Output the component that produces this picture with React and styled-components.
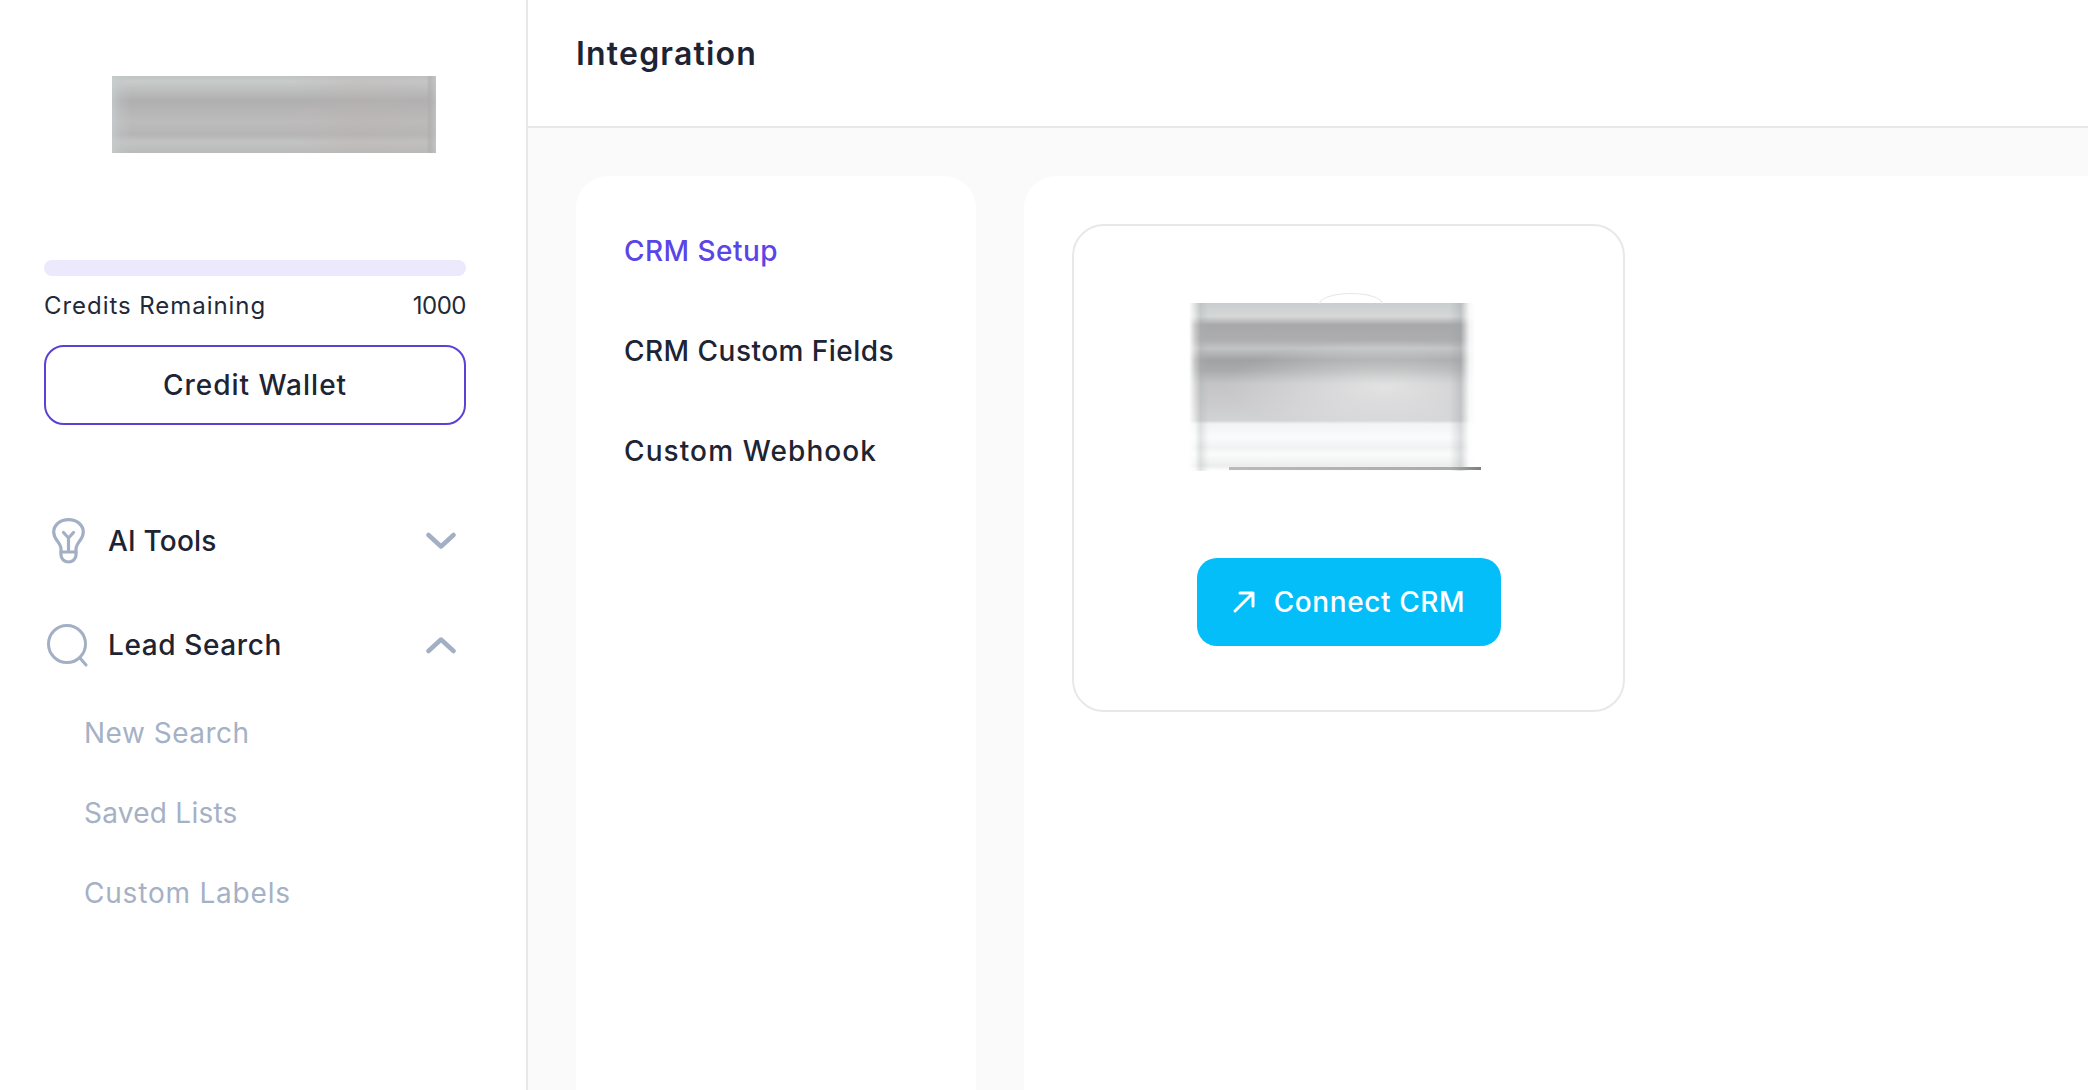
import styled, { createGlobalStyle } from "styled-components";

const GlobalStyle = createGlobalStyle`
  html, body {
    margin: 0;
    height: 100%;
    overflow: hidden;
    background: #fff;
    font-family: "Inter", "Noto Sans", sans-serif;
    color: #1e2433;
  }
  * { box-sizing: border-box; }
`;

// tracking widens the narrower fallback font to the widths in the picture
const subItems = [
  { label: "New Search", tracking: 0.5 },
  { label: "Saved Lists", tracking: 0.25 },
  { label: "Custom Labels", tracking: 0.8 },
];
const sections = [
  { label: "CRM Setup", tracking: 0.45 },
  { label: "CRM Custom Fields", tracking: 0.47 },
  { label: "Custom Webhook", tracking: 1.1 },
];

function BulbIcon() {
  return (
    <svg width="33" height="46" viewBox="0 0 33 46" fill="none" stroke="#a3afc4" strokeWidth="3.2" strokeLinecap="round" strokeLinejoin="round">
      <path d="M9 34v-3c0-3-1.600-5-4-8.500C2.800 19.500 1.700 17 1.700 14 1.700 7 8 1.600 16.500 1.600S31.300 7 31.300 14c0 3-1.100 5.500-3.300 8.500-2.400 3.500-4 5.500-4 8.500v3z" />
      <path d="M16.500 33V20M11.500 14.500l5 5.500 5-5.500" />
      <path d="M9 34v3c0 4 3.500 7 7.500 7s7.500-3 7.500-7v-3" />
    </svg>
  );
}

function SearchIcon() {
  return (
    <svg width="42" height="43" viewBox="0 0 42 43" fill="none" stroke="#a3afc4" strokeLinecap="round">
      <circle cx="20" cy="20" r="18.500" strokeWidth="3" />
      <path d="M33 34l6 7" strokeWidth="3" />
    </svg>
  );
}

function Chevron({ up }) {
  return (
    <ChevronSvg width="30" height="18" viewBox="0 0 30 18" fill="none" stroke="#a3afc4" strokeWidth="4.500" strokeLinecap="round" strokeLinejoin="round">
      <path d={up ? "M2.500 15L15 3.500 27.500 15" : "M2.500 3L15 14.500 27.500 3"} />
    </ChevronSvg>
  );
}

export default function App() {
  return (
    <>
      <GlobalStyle />
      <Layout>
        <Sidebar>
          <LogoBlur />
          <CreditBar />
          <CreditRow>
            <CreditLabel>Credits Remaining</CreditLabel>
            <CreditCount>1000</CreditCount>
          </CreditRow>
          <WalletButton>Credit Wallet</WalletButton>
          <Menu>
            <MenuRow>
              <MenuIcon><BulbIcon /></MenuIcon>
              <MenuLabel $tracking={0.2}>AI Tools</MenuLabel>
              <Chevron />
            </MenuRow>
            <MenuRow>
              <MenuIcon><SearchIcon /></MenuIcon>
              <MenuLabel $tracking={0.6}>Lead Search</MenuLabel>
              <Chevron up />
            </MenuRow>
            <SubMenu>
              {subItems.map((item) => (
                <SubItem key={item.label} $tracking={item.tracking}>{item.label}</SubItem>
              ))}
            </SubMenu>
          </Menu>
        </Sidebar>
        <Main>
          <Header>
            <Title>Integration</Title>
          </Header>
          <Content>
            <SectionPanel>
              {sections.map((item, index) => (
                <SectionItem key={item.label} $active={index === 0} $tracking={item.tracking}>
                  {item.label}
                </SectionItem>
              ))}
            </SectionPanel>
            <DetailPanel>
              <CrmCard>
                <CrmPicture />
                <ConnectButton>
                  <svg width="24" height="24" viewBox="0 0 24 24" fill="none" stroke="#fff" strokeWidth="3" strokeLinecap="round" strokeLinejoin="round">
                    <path d="M3 21L21 3M8 3h13v13" />
                  </svg>
                  Connect CRM
                </ConnectButton>
              </CrmCard>
            </DetailPanel>
          </Content>
        </Main>
      </Layout>
    </>
  );
}

const Layout = styled.div`
  display: flex;
  height: 100vh;
  overflow: hidden;
`;

const Sidebar = styled.aside`
  flex: 0 0 528px;
  border-right: 2px solid #e8e8e8;
  padding: 76px 60px 0 44px;
  background: #fff;
`;

const LogoBlur = styled.div`
  width: 324px;
  height: 77px;
  margin-left: 68px;
  background:
    linear-gradient(90deg, rgba(200, 206, 206, 0.7) 0, rgba(196, 202, 202, 0.25) 3%, transparent 6%, transparent 97%, rgba(172, 172, 172, 0.6) 98%, rgba(196, 198, 198, 0.6) 100%),
    linear-gradient(90deg, transparent 55%, rgba(190, 176, 176, 0.3) 75%, rgba(186, 178, 178, 0.2) 100%),
    linear-gradient(180deg, #c0c3c3 0, #c7cbca 7%, #bdbfbf 18%, #afafb0 32%, #b6b5b5 44%, #bdbcbc 60%, #b6b5b5 76%, #c2c4c3 86%, #b9bbba 100%);
`;

const CreditBar = styled.div`
  height: 16px;
  margin-top: 107px;
  border-radius: 8px;
  background: #ece9fc;
`;

const CreditRow = styled.div`
  display: flex;
  justify-content: space-between;
  margin-top: 14px;
  font-size: 24px;
  line-height: 32px;
  color: #222938;
`;

const CreditLabel = styled.span`
  letter-spacing: 0.95px;
`;

const CreditCount = styled.span`
  letter-spacing: -0.5px;
`;

const WalletButton = styled.button`
  display: block;
  width: 100%;
  height: 80px;
  margin-top: 23px;
  border: 2px solid #5943d6;
  border-radius: 20px;
  background: #fff;
  font-family: inherit;
  font-size: 28px;
  font-weight: 500;
  letter-spacing: 1px;
  color: #1e2433;
`;

const Menu = styled.nav`
  margin-top: 92px;
  display: flex;
  flex-direction: column;
  gap: 56px;
`;

const MenuRow = styled.div`
  display: flex;
  align-items: center;
  gap: 16px;
  height: 48px;
`;

const MenuIcon = styled.span`
  flex: 0 0 48px;
  display: flex;
  justify-content: center;
`;

const MenuLabel = styled.span`
  flex: 1;
  font-size: 28px;
  font-weight: 500;
  letter-spacing: ${(p) => p.$tracking}px;
  color: #1e2433;
`;

const ChevronSvg = styled.svg`
  margin-right: 10px;
`;

const SubMenu = styled.div`
  margin-top: -12px;
  padding-left: 40px;
  display: flex;
  flex-direction: column;
  gap: 40px;
`;

const SubItem = styled.div`
  font-size: 28px;
  line-height: 40px;
  letter-spacing: ${(p) => p.$tracking}px;
  color: #a5b1c5;
`;

const Main = styled.main`
  flex: 1;
  min-width: 0;
  display: flex;
  flex-direction: column;
  background: #fafafa;
`;

const Header = styled.header`
  flex: 0 0 128px;
  padding: 33px 48px 0;
  border-bottom: 2px solid #e8e8e8;
  background: #fff;
`;

const Title = styled.h1`
  margin: 0;
  font-size: 32px;
  line-height: 42px;
  font-weight: 600;
  letter-spacing: 1.2px;
  color: #1e2433;
`;

const Content = styled.div`
  flex: 1;
  display: flex;
  gap: 48px;
  padding: 48px 0 0 48px;
  min-height: 0;
`;

const SectionPanel = styled.section`
  flex: 0 0 400px;
  display: flex;
  flex-direction: column;
  gap: 60px;
  padding: 55px 48px 0;
  border-radius: 32px 32px 0 0;
  background: #fff;
`;

const SectionItem = styled.div`
  font-size: 28px;
  line-height: 40px;
  font-weight: 500;
  letter-spacing: ${(p) => p.$tracking}px;
  color: ${(p) => (p.$active ? "#5b45e6" : "#1e2433")};
`;

const DetailPanel = styled.section`
  flex: 1;
  padding: 48px;
  border-radius: 32px 0 0 0;
  background: #fff;
`;

const CrmCard = styled.div`
  width: 553px;
  height: 488px;
  padding-top: 77px;
  display: flex;
  flex-direction: column;
  align-items: center;
  border: 2px solid #e8e8e8;
  border-radius: 32px;
`;

const CrmPicture = styled.div`
  position: relative;
  width: 286px;
  height: 168px;
  margin-left: -33px;
  background:
    linear-gradient(90deg, #fff 0, rgba(255, 255, 255, 0.4) 2%, rgba(170, 175, 175, 0.3) 4%, transparent 7%, transparent 91%, rgba(150, 155, 158, 0.3) 95%, rgba(255, 255, 255, 0.85) 98%, #fff 100%),
    radial-gradient(ellipse 55% 28% at 68% 50%, rgba(255, 255, 255, 0.5), transparent 100%),
    linear-gradient(180deg, #c9cdcd 0, #d6d8d8 8%, #a8a8aa 13%, #adadaf 22%, #c2c3c4 27%, #a2a2a4 34%, #a9aaab 40%, #c4c4c6 48%, #cbcbcd 60%, #d2d3d4 70%, #f1f3f5 72%, #fbfbfc 80%, #f0f2f3 86%, #fbfbfb 90%, #eceded 97%, #ffffff 100%);

  &::before {
    content: "";
    position: absolute;
    left: 130px;
    top: -10px;
    width: 62px;
    height: 10px;
    border: 1px solid #e4e6e8;
    border-bottom: 0;
    border-radius: 50% 50% 0 0 / 100% 100% 0 0;
  }

  &::after {
    content: "";
    position: absolute;
    left: 40px;
    right: -6px;
    bottom: 1px;
    height: 3px;
    background: linear-gradient(90deg, #b9baba, #a9abab 88%, #7d7f7f);
  }
`;

const ConnectButton = styled.button`
  display: flex;
  align-items: center;
  justify-content: center;
  gap: 18px;
  width: 304px;
  height: 88px;
  margin-top: 87px;
  padding-top: 1px;
  border: 0;
  border-radius: 20px;
  background: #03bef8;
  font-family: inherit;
  font-size: 28px;
  font-weight: 500;
  letter-spacing: 0.6px;
  color: #fff;
`;
